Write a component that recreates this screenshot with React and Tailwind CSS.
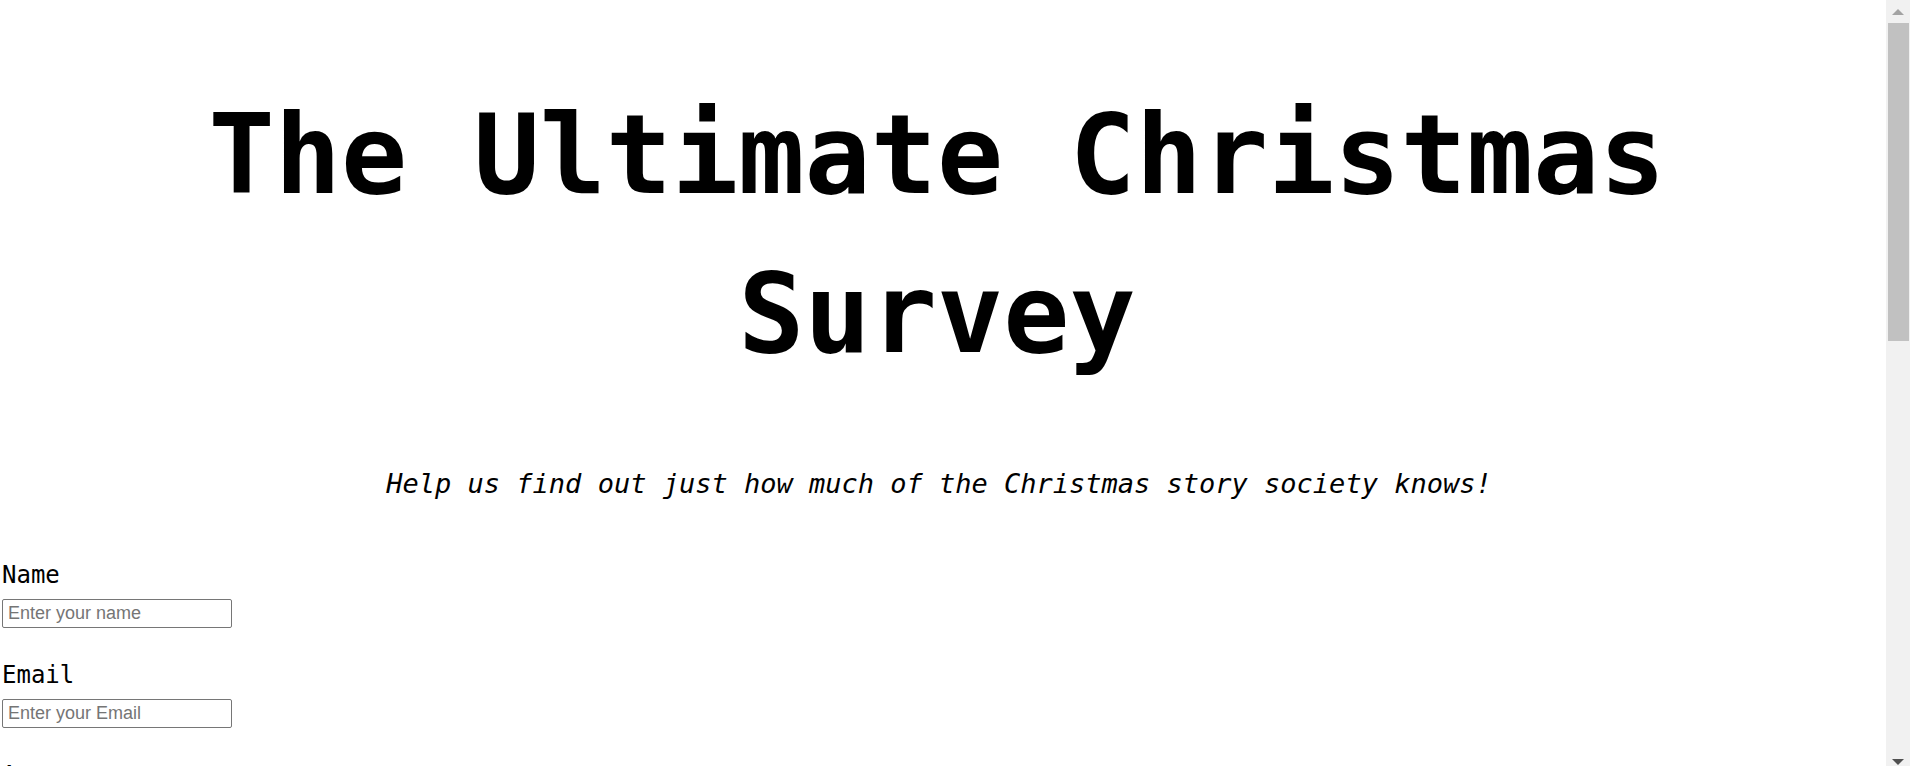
import React, { useState } from "react";

const mono = { fontFamily: '"DejaVu Sans Mono", "Liberation Mono", monospace' };

const Field = ({ label, name, placeholder, type = "text", value, onChange }) => (
  <div className="flex flex-col items-start">
    <label htmlFor={name} className="ml-[2px] text-[24px] leading-[33px] text-black" style={mono}>
      {label}
    </label>
    <input
      id={name}
      name={name}
      type={type}
      value={value}
      onChange={onChange}
      placeholder={placeholder}
      className="ml-[2px] mt-[7px] h-[29px] w-[230px] rounded-[2px] border border-[#767676] bg-white px-[5px] text-[18px] text-black placeholder:text-[#757575] focus:outline-none"
      style={{ fontFamily: '"Liberation Sans", Arial, sans-serif' }}
    />
  </div>
);

// Classic page scrollbar on the right edge
const Scrollbar = () => (
  <div className="flex h-screen w-[24px] shrink-0 flex-col bg-[#f1f1f1]">
    <div className="flex h-[23px] items-center justify-center">
      <div className="h-0 w-0 border-x-[6px] border-b-[6px] border-x-transparent border-b-[#a3a3a3]" />
    </div>
    <div className="ml-[2px] mr-[1px] h-[318px] bg-[#c1c1c1]" />
    <div className="flex-1" />
    <div className="flex h-[12px] items-end justify-center pb-[1px]">
      <div className="h-0 w-0 border-x-[6px] border-t-[6px] border-x-transparent border-t-[#505050]" />
    </div>
  </div>
);

export default function App() {
  const [form, setForm] = useState({ name: "", email: "", age: "" });

  // Handle form change
  const handleChange = (e) => {
    setForm({ ...form, [e.target.name]: e.target.value });
  };

  return (
    <div className="flex h-screen overflow-hidden bg-white text-black" style={mono}>
      <main className="h-screen min-w-0 flex-1 overflow-hidden">
        <h1 className="pl-[90px] pr-[102px] pt-[76px] text-center text-[110px] font-bold leading-[159px]">
          The Ultimate Christmas Survey
        </h1>
        <p className="mt-[70px] pr-[8px] text-center text-[27px] italic leading-[39px]">
          Help us find out just how much of the Christmas story society knows!
        </p>

        <form className="mt-[56px] flex flex-col gap-[31px]" onSubmit={(e) => e.preventDefault()}>
          <Field label="Name" name="name" placeholder="Enter your name" value={form.name} onChange={handleChange} />
          <Field label="Email" name="email" type="email" placeholder="Enter your Email" value={form.email} onChange={handleChange} />
          <Field label="Age" name="age" type="number" placeholder="Enter your Age" value={form.age} onChange={handleChange} />
        </form>
      </main>
      <Scrollbar />
    </div>
  );
}
